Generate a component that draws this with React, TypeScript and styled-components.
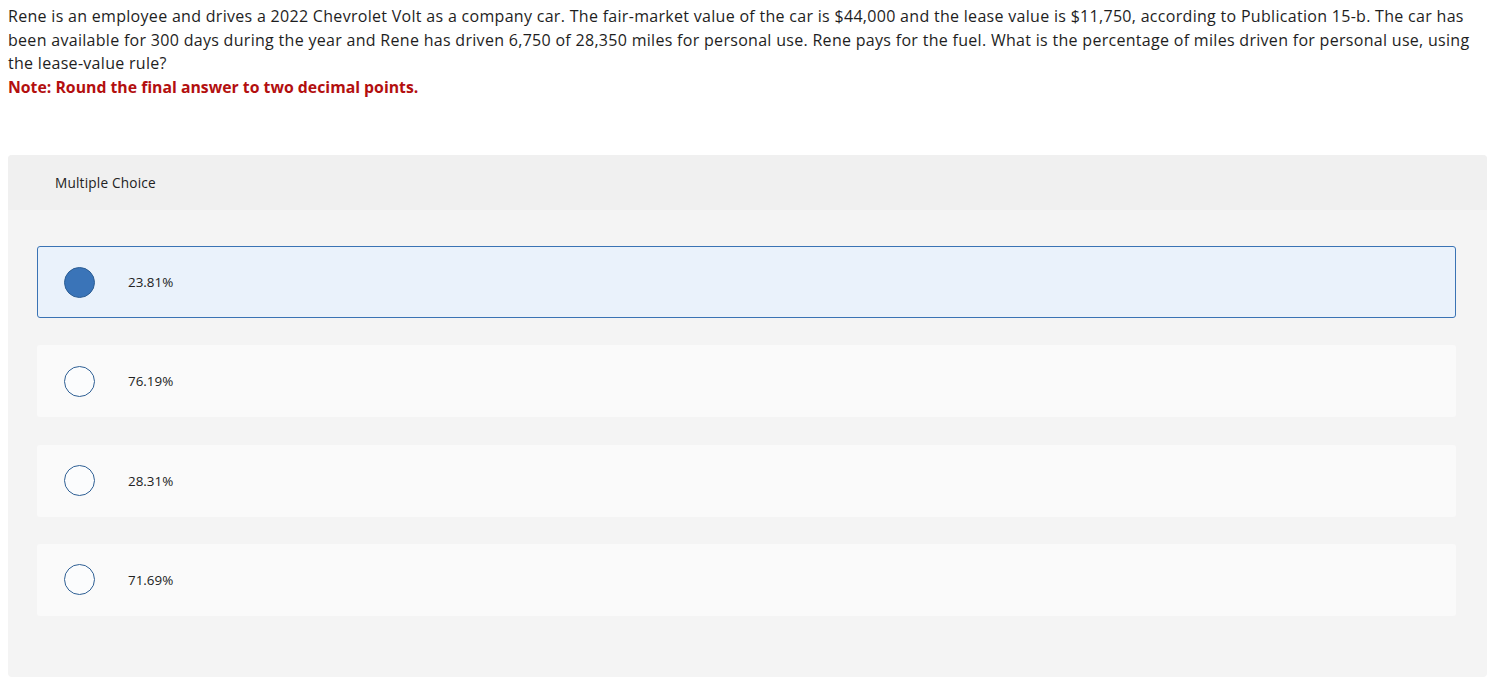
import React from "react";
import styled, { createGlobalStyle } from "styled-components";

const Global = createGlobalStyle`
  html, body { margin: 0; padding: 0; background: #fff; }
  body { font-family: "Open Sans", "Liberation Sans", sans-serif; color: #1a1a1a; }
`;

const Page = styled.div`
  padding: 5px 8px 0 8px;
`;

const Question = styled.p`
  margin: 0;
  font-size: 16px;
  line-height: 23.5px;
  color: #1e1e1e;
  letter-spacing: 0.3px;
  white-space: nowrap;
`;

const Note = styled.p`
  margin: 0;
  font-size: 15.8px;
  line-height: 23.5px;
  font-weight: 700;
  color: #b30f0f;
`;

const Panel = styled.section`
  margin-top: 56px;
  width: 1479px;
  background: #f4f4f4;
  border-radius: 4px;
  overflow: hidden;
  padding-bottom: 61px;
`;

const PanelHeader = styled.div`
  height: 55px;
  background: #f0f0f0;
  display: flex;
  align-items: center;
  padding-left: 47px;
  font-size: 13.6px;
  letter-spacing: 0.2px;
  color: #222;
`;

const Options = styled.div`
  display: flex;
  flex-direction: column;
  gap: 27.3px;
  padding: 36px 31px 0 29px;
`;

const Option = styled.div<{ $selected?: boolean }>`
  height: 72px;
  box-sizing: border-box;
  display: flex;
  align-items: center;
  padding-left: 26px;
  border-radius: 3px;
  background: ${(p) => (p.$selected ? "#eaf2fb" : "#fafafa")};
  border: 1px solid ${(p) => (p.$selected ? "#3a73b4" : "transparent")};
`;

const Radio = styled.span<{ $selected?: boolean }>`
  width: 31px;
  height: 31px;
  box-sizing: border-box;
  border-radius: 50%;
  border: 1.5px solid #2e5f94;
  background: ${(p) => (p.$selected ? "#3a74b8" : "#fbfcfd")};
  flex: none;
`;

const Label = styled.span`
  margin-left: 33px;
  font-size: 13.4px;
  color: #222;
`;

const choices = ["23.81%", "76.19%", "28.31%", "71.69%"];

export default function App() {
  return (
    <>
      <Global />
      <Page>
        <Question>
          Rene is an employee and drives a 2022 Chevrolet Volt as a company car. The fair-market value of the car is
          $44,000 and the lease value is $11,750, according to Publication 15-b. The car has
          <br />
          been available for 300 days during the year and Rene has driven 6,750 of 28,350 miles for personal use. Rene
          pays for the fuel. What is the percentage of miles driven for personal use, using
          <br />
          the lease-value rule?
        </Question>
        <Note>Note: Round the final answer to two decimal points.</Note>
        <Panel>
          <PanelHeader>Multiple Choice</PanelHeader>
          <Options>
            {choices.map((c, i) => (
              <Option key={c} $selected={i === 0}>
                <Radio $selected={i === 0} />
                <Label>{c}</Label>
              </Option>
            ))}
          </Options>
        </Panel>
      </Page>
    </>
  );
}
